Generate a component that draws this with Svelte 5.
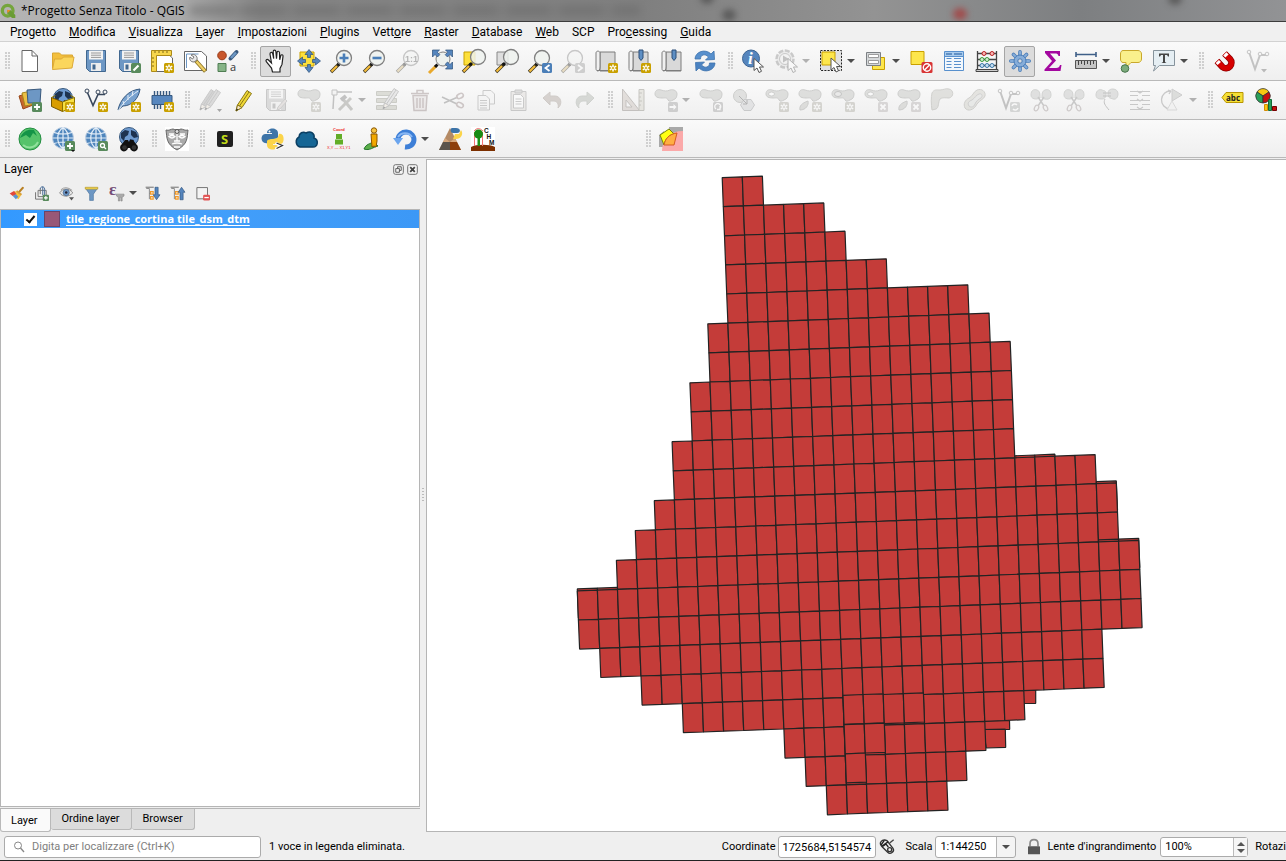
<script>
  const badge = (fill, mark) =>
    `<rect x="14" y="14" width="10" height="10" rx="1.5" fill="${fill}"/>${mark}`;
  const starMark =
    '<path d="M19 15.5v7M15.8 17.2l6.4 3.6M22.2 17.2l-6.4 3.6" stroke="#fff" stroke-width="1.5"/><circle cx="19" cy="19" r="1" fill="#c9a000"/>';
  const star = badge('#c9a000', starMark);
  const greyStar = badge('#a9a592', starMark.replace('#c9a000', '#a9a592'));
  const plus = badge('#588a5c', '<path d="M19 16v6M16 19h6" stroke="#fff" stroke-width="1.8"/>');
  const greyCross = badge('#b3a9a9', '<path d="M16.5 16.5l5 5M21.5 16.5l-5 5" stroke="#fff" stroke-width="1.8"/>');
  const cursor = (x, y) =>
    `<path transform="translate(${x} ${y})" d="M0 0v12l3-2.5 2 4.5 2.5-1.2-2-4.3h4z" fill="#fff" stroke="#555" stroke-width="1"/>`;
  const lens = (cx = 14, cy = 9, r = 7.5) =>
    `<path d="M1 23l8-8" stroke="#3a3320" stroke-width="3.4"/><path d="M1.5 22.5l5.5-5.5" stroke="#f5bd3c" stroke-width="2.2"/><path d="M8 16l2-2" stroke="#111" stroke-width="3"/><circle cx="${cx}" cy="${cy}" r="${r}" fill="#eef2ee" fill-opacity=".85" stroke="#808080" stroke-width="1.3"/>`;
  const blob = '<path d="M1 6c0-4 3-5 6-4 3 1 6 1.500 9 0 4-1 7 1 7 4s-1 5-4 6c-2 1-4 2-5 0-1-3-3-2-6-2-4 0-7-1-7-4z" fill="#b9bbb4" stroke="#8d908a"/>';
  const leaf = '<path d="M2 22c-1-4 2-7 8-9 1 4-2 9-8 9z" fill="#b9bbb4" stroke="#8d908a"/>';
  const globe =
    '<circle cx="12" cy="11" r="10.500" fill="#4f86bd" stroke="#b8cbe0"/><path d="M12 .5v21M1.500 11h21M3 5.500q9 3 18 0M3 16.500q9-3 18 0M12 .5c-7 5-7 16 0 21M12 .5c7 5 7 16 0 21" fill="none" stroke="#e4eef8" stroke-width="1.2"/>';
  const earth =
    '<circle cx="12" cy="10" r="9.500" fill="#6f9bd0" stroke="#38597e"/><path d="M4 6l4-3 4 1-1 4-3 2-1 4-3-3zM14 3l5 2 2 5-4 1-3-3zM13 12l4 1-2 5-3-2z" fill="#1e3350"/>';
  const pencil = (f, s, t = '') =>
    `<g ${t}><path d="M5 23l1.500-6L16 2.500l4.500 3L11 19.500z" fill="${f}" stroke="${s}"/><path d="M8.500 18L18 4" stroke="${s}" stroke-width="1"/><path d="M5 23l1.500-6 4.500 2.500z" fill="#f3e3c6" stroke="${s}"/><path d="M5 23l.7-2.500 1.500 1z" fill="#222"/></g>`;
  const book = () =>
    '<path d="M6 3h15v19h-15z" fill="#d9d9d9" stroke="#7d7d7d"/><path d="M2 4c0-2.500 4-2.500 4 0v14c0 5-4 5-4 1.500z" fill="#f0f0f0" stroke="#7d7d7d"/><path d="M3 21.500h18" stroke="#7d7d7d"/>';
  const mark = (x) => `<path d="M${x} 1h4v8l-2 2.500-2-2.500z" fill="#5e8fc4" stroke="#2c4f78"/>`;
  const scissors =
    '<path d="M2 7c0-5 3-6 6-5s3 4 3 8c-4 2-9 1-9-3zM13 10c0-4 0-7 3-8s6 0 6 5-5 5-9 3z" fill="#bcc0bb" stroke="#989c97"/><path d="M9 9l6 9M15 9l-6 9" stroke="#888" stroke-width="1.5"/><ellipse cx="7.500" cy="20" rx="2" ry="3" fill="none" stroke="#a28f90" stroke-width="1.3" transform="rotate(25 7.500 20)"/><ellipse cx="16.500" cy="20" rx="2" ry="3" fill="none" stroke="#a28f90" stroke-width="1.300" transform="rotate(-25 16.500 20)"/>';
  const floppy = (f, s) =>
    `<path d="M2.500 1.500h19v21h-16l-3-3z" fill="${f}" stroke="${s}"/><path d="M5 1.500h14v9h-14z" fill="#f3f3f3"/><path d="M7 4h10M7 6.200h10M7 8.400h10" stroke="#999"/><path d="M7 14h10v8h-10z" fill="#eee"/><path d="M8.500 15.500h3v5h-3z" fill="${s}"/>`;
  const nodes =
    '<path d="M4 3l6 17 5-14h7" fill="none" stroke="#7a7a7a" stroke-width="2"/><g fill="#f2f2f2" stroke="#7a7a7a"><circle cx="4" cy="3" r="1.800"/><circle cx="15" cy="5" r="1.800"/><circle cx="22" cy="5" r="1.800"/></g>';

  const icons = {
    qgis: '<circle cx="11.500" cy="11.500" r="8" fill="none" stroke="#74a53c" stroke-width="5"/><path d="M11 11h5l7 7v4.500h-5l-7-7z" fill="#6a9c34"/><path d="M10.500 10l5 1-4 4z" fill="#ef8b24"/>',
    newProject: '<path d="M4 1.500h10l5.500 5.500v15.500h-15.500z" fill="#fff" stroke="#666"/><path d="M14 1.500v5.500h5.500" fill="none" stroke="#666"/>',
    open: '<path d="M1.500 19v-15h7l2 2h11v4z" fill="#f3bf3d" stroke="#d9a633"/><path d="M1.500 20.500l2-10.500h7l2-2h10.500l-2 11z" fill="#fbd65c" stroke="#dca937"/>',
    save: floppy('#6d97c4', '#41678f'),
    saveAs: floppy('#6d97c4', '#41678f') + badge('#588a5c', '<path d="M16.500 21.500l5-5" stroke="#fff" stroke-width="2.200"/>'),
    layout: '<path d="M6 5h12l4.500 4v13.500h-16.500z" fill="#fff" stroke="#666"/><path d="M1.500 1.500h20v5h-15v16h-5z" fill="#f7d64c" stroke="#ad8b18"/><path d="M5 2v2M9 2v2M13 2v2M17 2v2M2 9h2M2 13h2M2 17h2" stroke="#806a18"/>' + star,
    layoutManager: '<path d="M1.500 2.500h17l5 4.500v14.500h-22z" fill="#fff" stroke="#666"/><path d="M3.500 5h12M3.500 5v14" stroke="#6d97c4"/><path d="M8 6c3-2 7 1 6 5l-3 2c-3 0-5-2-4-5l2.500 2 1.500-2z" fill="#e8e8e8" stroke="#777"/><path d="M13 12l9.500 10.500" stroke="#8a7327" stroke-width="4"/><path d="M13.500 12.500l8.500 9.500" stroke="#efcf63" stroke-width="2.300"/>',
    style: '<circle cx="6" cy="6.500" r="4.300" fill="#c8572c" stroke="#9a3b18"/><path d="M14.500 9.500l6-6.500" stroke="#38587c" stroke-width="4" stroke-linecap="round"/><path d="M15 9l5-5.500" stroke="#6d97c4" stroke-width="2.500"/><path d="M2 14.500h8v8h-8z" fill="#86b487" stroke="#4f7d53"/><text x="14" y="22" font-family="Open Sans, sans-serif" font-size="11" fill="#333">a</text>',
    pan: '<path d="M8.500 23l-1-4-5-6c-1.500-2 .5-3.500 2-2l3 3-1.500-9c0-2 2.300-2.300 2.700-.4l1 5-.5-7c0-2 2.500-2 2.700 0l.6 7 .5-6c.2-2 2.500-1.700 2.500.2l.2 7 1-4c.6-1.700 2.600-1.200 2.300.6l-1 8-2 4v3.600z" fill="#fff" stroke="#222" stroke-width="1.200"/>',
    panSelection: '<path d="M3 3h14v14h-14z" fill="#fde03c" stroke="#c9a000"/><g fill="#5585bd" stroke="#2d5078" stroke-width=".7"><path d="M12 .5l4 5h-2.500v3h-3v-3h-2.500z"/><path d="M12 23.500l4-5h-2.500v-3h-3v3h-2.500z"/><path d="M.5 12l5-4v2.500h3v3h-3v2.500z"/><path d="M23.500 12l-5-4v2.500h-3v3h3v2.500z"/></g>',
    zoomIn: lens() + '<path d="M14 4.500v9M9.500 9h9" stroke="#4b7fb8" stroke-width="2.600"/>',
    zoomOut: lens() + '<path d="M9.500 9h9" stroke="#4b7fb8" stroke-width="2.600"/>',
    zoomNative: lens(15) + '<text x="9" y="13" font-family="Liberation Sans, sans-serif" font-weight="bold" font-size="9" fill="#555">1:1</text>',
    zoomFull: '<path d="M0 24l7-7" stroke="#e9a92c" stroke-width="3"/><path d="M6 18l2.500-2.500" stroke="#111" stroke-width="3"/><circle cx="14" cy="10" r="7" fill="#eef2ee" stroke="#808080"/><g fill="#5585bd" stroke="#2d5078" stroke-width=".7"><path d="M3.500 1h7l-2.200 2.200 2.500 2.500-2.300 2.300-2.500-2.500-2.500 2.500z"/><path d="M23.500 1h-7l2.200 2.200-2.500 2.500 2.300 2.300 2.500-2.500 2.500 2.500z"/><path d="M23.500 20h-7l2.200-2.200-2.500-2.500 2.300-2.300 2.500 2.500 2.500-2.500z"/></g>',
    zoomSelection: '<path d="M2 3h11v13h-11z" fill="#fde03c" stroke="#c9a000"/>' + lens(16, 8),
    zoomLayer: '<path d="M2 3h11v13h-11z" fill="#dedede" stroke="#888"/>' + lens(16, 8),
    zoomLast: lens() + badge('#4b7fb8', '<path d="M21.500 16l-4 3 4 3" fill="none" stroke="#fff" stroke-width="1.800"/>'),
    zoomNext: lens() + badge('#999', '<path d="M17 16l4 3-4 3" fill="none" stroke="#fff" stroke-width="1.800"/>'),
    newView: book() + star,
    newBookmark: book() + mark(12) + star,
    bookmarks: book() + mark(12),
    refresh: '<path d="M2 10c0-7 10-11 16-5l3-3 .5 8.500-9 .5 3-3c-4-4-8-2-8 2z" fill="#5890cd" stroke="#3f74ad" stroke-width=".8"/><path d="M22 14c0 7-10 11-16 5l-3 3-.5-8.500 9-.5-3 3c4 4 8 2 8-2z" fill="#4b83c2" stroke="#3f74ad" stroke-width=".8"/>',
    identify: '<circle cx="10" cy="9.500" r="8.500" fill="#5585bd" stroke="#3c6594"/><text x="7" y="15" font-family="Liberation Serif, serif" font-style="italic" font-weight="bold" font-size="17" fill="#fff">i</text>' + cursor(13, 9.500),
    action: '<circle cx="11" cy="10" r="8.500" fill="#ddd" stroke="#888" stroke-width="2.500" stroke-dasharray="5 1.600"/><circle cx="11" cy="10" r="5.500" fill="#eee" stroke="#888"/><path d="M9 6.500l6 3.500-6 3.500z" fill="#777"/>' + cursor(14, 9.500),
    select: '<path d="M1.500 1.500h21v20h-21z" fill="#e2e2e2" stroke="#222" stroke-dasharray="2 1.300"/><path d="M3 3h13v13h-13z" fill="#fde64c" stroke="#c9a000"/>' + cursor(12, 9),
    selectValue: '<path d="M8.500 8.500h12v12h-12z" fill="#fde64c" stroke="#c9a000"/><path d="M2.500 3.500h14v13h-14z" fill="#d5d8da" stroke="#7c8084"/><path d="M4.500 5.500h10v3h-10zM4.500 11.500h10v3h-10z" fill="#fff" stroke="#888" stroke-width=".8"/>',
    deselect: '<path d="M2 2.500h13v13h-13z" fill="#fde64c" stroke="#c9a000"/><rect x="12.500" y="13" width="11" height="11" rx="1.500" fill="#d83434"/><circle cx="18" cy="18.500" r="3.700" fill="none" stroke="#fff" stroke-width="1.400"/><path d="M15.500 21l5-5" stroke="#fff" stroke-width="1.400"/>',
    table: '<path d="M2.500 2.500h19v19h-19z" fill="#f2f7fc" stroke="#5890cd"/><path d="M3 3h18v4h-18z" fill="#a9cbec"/><path d="M4 5h6M12 5h8" stroke="#4b7fb8" stroke-width="1.500"/><path d="M4.500 9.500h5M4.500 12.500h5M4.500 15.500h5M4.500 18.500h5M12 9.500h7M12 12.500h7M12 15.500h7M12 18.500h7" stroke="#5890cd"/><path d="M3 7.500h18" stroke="#5890cd"/>',
    abacus: '<path d="M2.500 2v19M21.500 2v19M2.500 4.500h19M2.500 10.500h19M2.500 16.500h19" stroke="#444" stroke-width="1.300"/><path d="M1 20.500h22v2h-22z" fill="#ccc" stroke="#444"/><g stroke="#b22" fill="#f6b4b4"><circle cx="9" cy="4.500" r="2"/><circle cx="17" cy="4.500" r="2"/></g><g stroke="#3b9a3b" fill="#cdeccd"><circle cx="7" cy="10.500" r="2"/><circle cx="12" cy="10.500" r="2"/></g><g stroke="#3a78a8" fill="#c8dff2"><circle cx="7" cy="16.500" r="2"/><circle cx="12" cy="16.500" r="2"/><circle cx="17" cy="16.500" r="2"/></g>',
    gear: '<g stroke="#4a7db8" stroke-width="3.600" stroke-linecap="round"><path d="M12 2.800v18.400M2.800 12h18.400M5.500 5.500l13 13M18.500 5.500l-13 13"/></g><g stroke="#86add9" stroke-width="2" stroke-linecap="round"><path d="M12 2.800v18.400M2.800 12h18.400M5.500 5.500l13 13M18.500 5.500l-13 13"/></g><circle cx="12" cy="12" r="6" fill="#86add9" stroke="#4a7db8"/><circle cx="12" cy="12" r="2.200" fill="#ddd" stroke="#4a7db8"/>',
    sigma: '<path d="M4 2h15v5h-1.500c-.5-2-1.500-2.500-3.500-2.500h-5l6 7-7 7.500h7c2.500 0 3.500-1 4-3h1.500l-1 6h-16v-1.500l7.500-8.500-7-8z" fill="#a3079f"/>',
    measure: '<path d="M2 5.500h20M2 3v5M22 3v5" stroke="#3f5f88" stroke-width="1.600"/><path d="M1.500 11.500h21v8h-21z" fill="#c5c5c5" stroke="#555"/><path d="M4.500 12v4M7.500 12v3M10.500 12v4M13.500 12v3M16.500 12v4M19.500 12v3" stroke="#444"/>',
    tips: '<path d="M4 1.500h15c2 0 3.500 1.500 3.500 3.500v5c0 2-1.500 3.500-3.500 3.500h-7l-5 5v-5h-3c-1.500 0-2.500-1.500-2.500-3.500v-5c0-2 1-3.500 2.500-3.500z" fill="#faf08c" stroke="#c9a82c"/><circle cx="6" cy="19.500" r="3.800" fill="#7cab7c" stroke="#47744b"/>',
    annotation: '<path d="M1.500 1.500h21v15h-15l-6 5.500 2-5.500h-2z" fill="#e5eef3" stroke="#86939c"/><path d="M7 4.500h10v3h-1l-1-1.500h-2v7l1.500 1h-5l1.500-1v-7h-2l-1 1.500h-1z" fill="#444"/>',
    magnet: '<path d="M11.500 4.500l5.500 5.500a5.500 5.500 0 0 1-7.500 8l-5.500-6" fill="none" stroke="#8e0000" stroke-width="6.500" transform="translate(1 0)"/><path d="M11.500 4.500l5.500 5.500a5.500 5.500 0 0 1-7.500 8l-5.500-6" fill="none" stroke="#d60000" stroke-width="5" transform="translate(1 0)"/><path d="M12.800 4.800l2.200 2.200M5.300 12.400l2 2.200" stroke="#fff" stroke-width="4.500"/>',
    snapping: nodes + '<path d="M16 20h6l-3 3.500z" fill="#666"/>',
    dataSource: '<path d="M1 8l9-3 5 12-10 4z" fill="#c8672c" stroke="#994718"/><path d="M4 5l9-2 4 13-10 2z" fill="#eac045" stroke="#a98518"/><path d="M9 2l14-1-1 14-12 0z" fill="#6d97c4" stroke="#38587c"/>' + plus,
    geopackage: earth + '<path d="M.5 9.500l11 4.500v9.500l-11-5z" fill="#d99d00" stroke="#775800"/><path d="M23.500 9.500l-12 4.500v9.500l12-5z" fill="#f6df44" stroke="#8b7000"/><path d="M.5 9.500l4-2M23.500 9.500l-4-2" stroke="#8b7000"/>' + star,
    shapefile: '<path d="M3 3.500l6 14 5-11h7" fill="none" stroke="#38475c" stroke-width="1.600"/><g fill="#f5f5f5" stroke="#38475c"><circle cx="3" cy="3" r="2"/><circle cx="14" cy="4" r="2"/><circle cx="21" cy="4" r="2"/></g>' + star,
    spatialite: '<path d="M1 22c2-10 10-20 22-21-1 9-8 17-17 17z" fill="#78a2cf" stroke="#375980"/><path d="M1 23c5-8 10-13 20-20M7 17l-1-4M11 12l0-5M15 8l1-5" stroke="#e5eef8" fill="none"/>' + star,
    memory: '<path d="M2 7.500h20v9h-20z" fill="#5787bf" stroke="#375980"/><path d="M4.500 3v4M7.500 3v4M10.500 3v4M13.500 3v4M16.500 3v4M19.500 3v4M4.500 17v4M7.500 17v4M10.500 17v4" stroke="#375980" stroke-width="1.400"/>' + star,
    edits: pencil('#a5a5a5', '#8a8a8a', 'transform="translate(-3 -1)"') + pencil('#b5b5b5', '#8a8a8a', 'transform="translate(2 -1)"') + '<path d="M19 21h5l-2.500 3z" fill="#333"/>',
    toggleEdit: pencil('#f1d936', '#8a7718'),
    saveEdits: floppy('#b5b5b5', '#888') + '<path d="M13 22l1-3 7-8 2 2-7 8z" fill="#d3c6c0" stroke="#999"/>',
    addFeature: blob + greyStar,
    vertex: '<path d="M4 4l-1 17M4 4h18" stroke="#777" stroke-width="1.500"/><path d="M2 2h5v5h-5z" fill="#eee" stroke="#777"/><path d="M12 10l10 12M21 10l-12 12" stroke="#8b8b80" stroke-width="3"/><path d="M11 12l5-4" stroke="#777" stroke-width="4"/>',
    modifyAll: '<path d="M1.500 3.500h20v4h-20zM1.500 10.500h20v4h-20zM1.500 17.500h20v4h-20z" fill="#b7b9a0" stroke="#909278"/>' + pencil('#d4d4d4', '#858585', 'transform="translate(3 -2)"'),
    trash: '<path d="M5 7.500h14l-1 15h-12z" fill="#e6dada" stroke="#9e7c7c" stroke-width="1.500"/><path d="M3 5.500h18M9 5v-2.500h6v2.500M9 10v10M12 10v10M15 10v10" stroke="#9e7c7c" stroke-width="1.500" fill="none"/>',
    cut: '<path d="M1 9l15 7M3 15l14-6" stroke="#777" stroke-width="1.600"/><ellipse cx="19" cy="8" rx="3.500" ry="2.300" fill="none" stroke="#a28080" stroke-width="1.600" transform="rotate(-25 19 8)"/><ellipse cx="19" cy="17" rx="3.500" ry="2.300" fill="none" stroke="#a28080" stroke-width="1.600" transform="rotate(25 19 17)"/>',
    copy: '<path d="M9 2.500h8l3.500 3.500v10h-11.500z" fill="#f4f4f4" stroke="#8c8c8c"/><path d="M4 7.500h8l3.500 3.500v11h-11.500z" fill="#f4f4f4" stroke="#8c8c8c"/><path d="M6 12.500h7M6 15h7M6 17.500h7M6 20h7" stroke="#8c8c8c"/>',
    paste: '<path d="M4 3.500h15v19h-15z" fill="#ddd8d0" stroke="#8c8c8c"/><path d="M6.500 6.500h7l3 3v10.500h-10z" fill="#fff" stroke="#8c8c8c"/><path d="M8 2h7v3h-7z" fill="#bbb" stroke="#888"/><path d="M8.500 11h6M8.500 13.500h6M8.500 16h6" stroke="#8c8c8c"/>',
    undo: '<path d="M3 10l7-6v4h5c6 0 8 8 3 12 1-4-1-7-4-7h-4v4z" fill="#b09c8c" stroke="#a08c7c"/>',
    redo: '<path d="M21 10l-7-6v4h-5c-6 0-8 8-3 12-1-4 1-7 4-7h4v4z" fill="#a5b0a0" stroke="#939e8f"/>',
    cad: '<path d="M1.500 1l17 21.500h-17zM5 12v7h6z" fill="#cdb9ac" stroke="#85776c" fill-rule="evenodd"/><path d="M18 1.500h5v21h-5zM18 5h3M18 9h2M18 13h3M18 17h2" fill="#d5d0bb" stroke="#85806c"/>',
    move: blob + badge('#999', '<path d="M15.500 18h4v-2l3 3-3 3v-2h-4z" fill="#fff"/>'),
    rotate: blob + badge('#999', '<path d="M17 21a3 3 0 1 1 3.500 0M21 18v3.500h-3" fill="none" stroke="#fff" stroke-width="1.300"/>'),
    simplify: '<circle cx="8" cy="8" r="6.500" fill="#bfc1bd" stroke="#8d908a"/><path d="M12 11.500h7l3.500 5.500-3.500 5.500h-7l-3.500-5.500z" fill="#c8cbd0" stroke="#8b8e92"/><path d="M7 8l8 8M15 12v4h-4" fill="none" stroke="#555"/>',
    addRing: blob + '<ellipse cx="6.500" cy="6" rx="3" ry="2" fill="#fff" stroke="#8d908a"/>' + greyStar,
    addPart: blob + leaf + greyStar,
    fillRing: blob + '<ellipse cx="7" cy="6" rx="3.500" ry="2.500" fill="#d8d8d4" stroke="#777"/>' + greyStar,
    deleteRing: blob + '<ellipse cx="6.500" cy="6" rx="3" ry="2" fill="#fff" stroke="#8d908a"/>' + greyCross,
    deletePart: blob + leaf + greyCross,
    reshape: '<path d="M2 22c-1-6-1-13 0-17 2-4 5-3 8-3s6-2 9-1c5 1 5 8 0 9-3 0-7-1-9 1-2 3-1 9-4 10z" fill="#c1c0b4" stroke="#97968a"/>',
    offset: '<path d="M2 20c-2-4 0-8 4-10 4-2 4-6 8-8 5-2 9 2 8 6-1 3-5 4-8 8-3 6-9 8-12 4z" fill="#cbc9b8" stroke="#98968a"/><path d="M6 18c-2-3 0-5 3-6 3-2 4-5 7-6 3-1 4 2 2 4-2 1-5 3-6 6-1 3-4 4-6 2z" fill="#d5d8d3" stroke="#999"/>',
    reshapeLine: nodes + badge('#a5aba8', '<path d="M16 18a3 3 0 0 1 5-1M22 20a3 3 0 0 1-5 1" fill="none" stroke="#fff" stroke-width="1.500"/>'),
    split: scissors,
    merge: '<path d="M1 7c0-5 4-6 6-5s4 0 4 4-2 5-4 5-6 0-6-4zM13 6c0-4 2-5 5-5s5 2 5 5-2 6-5 5-5-1-5-5z" fill="#bcc0bb" stroke="#989c97"/><path d="M8 5h8M8 8h8M10 11c-2 4 0 6 4 11" stroke="#777" fill="none"/>',
    mergeAttr: '<path d="M2 3.500h20M2 7.500h8M14 7.500h8M2 12.500h20M2 16.500h8M14 16.500h8M2 21.500h20M9 3l3 2 3-2M9 11l3 2 3-2M9 19l3 2 3-2" stroke="#888" stroke-width="1.200" fill="none"/>',
    rotateSymbols: '<path d="M9 21a9 9 0 0 1 1-18M10 3l-3-1M10 3l-2 3" fill="none" stroke="#888" stroke-width="1.300"/><path d="M11 1l10 6-10 6z" fill="#b5b8b3" stroke="#909090"/><path d="M6 22l5-9 5 9z" fill="#f0f0f0" stroke="#b0b0b0"/>',
    label: '<path d="M1 9.500l4-5h17v10h-17z" fill="#f5df35" stroke="#b89500"/><text x="5" y="12.500" font-family="Open Sans, sans-serif" font-weight="bold" font-size="8" fill="#222">abc</text>',
    diagram: '<path d="M9 8L3 4a7 7 0 0 1 12 0z" fill="#f7c912" stroke="#333" stroke-width=".8"/><path d="M9 8v7A7 7 0 0 1 3 4z" fill="#29a05a" stroke="#333" stroke-width=".8"/><path d="M9 8l6-4a7 7 0 0 1-6 11z" fill="#c80f0f" stroke="#333" stroke-width=".8"/><path d="M10.500 16.500h3v6h-3z" fill="#f7c912" stroke="#d58b00"/><path d="M14.500 11.500h3v11h-3z" fill="#29a05a" stroke="#136b38"/><path d="M18.500 18.500h4v4h-4z" fill="#c80f0f" stroke="#700"/>',
    greenBall: '<circle cx="12" cy="12" r="11" fill="#56c36b" stroke="#258e42"/><path d="M2 11c3-7 8-9 14-8l3 6-4-3-3 5-4-3z" fill="#149447"/><path d="M5 18c5 4 12 3 15-3" fill="none" stroke="#91e09c" stroke-width="2"/>',
    webAdd: globe + plus + '<path d="M20 23h4l-2 2z" fill="#111"/>',
    webSearch: globe + badge('#588a5c', '<circle cx="18.500" cy="18.500" r="2" fill="none" stroke="#fff" stroke-width="1.300"/><path d="M20 20l2 2" stroke="#fff" stroke-width="1.300"/>'),
    binoculars: earth + '<path d="M8 13h3l1 2 1-2h3l3 4a4 4 0 1 1-6 4h-2a4 4 0 1 1-6-4z" fill="#111"/><circle cx="7.500" cy="20.500" r="2.300" fill="#333"/><circle cx="17" cy="20.500" r="2.300" fill="#333"/>',
    mask: '<path d="M0 0h24v24h-24z" fill="#fff"/><path d="M1 3c3 1 5-1 7-1 2 1 6 1 8 0 2 0 4 2 7 1-1 8 0 14-11 20C1 17 2 11 1 3z" fill="#aaa" stroke="#666"/><path d="M4 7h5M15 7h5M4 9.500q3-2 6 0q-3 3-6 0zM14 9.500q3-2 6 0q-3 3-6 0zM12 6v8M9 14h6M7 17q5-2 10 0M9 20h6" fill="none" stroke="#fff" stroke-width="1.300"/><circle cx="12" cy="4.500" r="2" fill="#ddd" stroke="#555"/>',
    scp: '<rect x="4" y="4" width="16" height="16" rx="2" fill="#202020"/><text x="8" y="17" font-family="Open Sans, sans-serif" font-weight="bold" font-size="13" fill="#c2dc18">S</text>',
    python: '<path d="M6 6c0-6 11-6 11 0v4c0 3-8 1-9 4l-1 2c-8 2-8-9-3-9h7v-1z" fill="#3d74a8"/><path d="M18 7c6-2 6 11 1 10h-7v1h5c0 6-11 6-11 0v-4c1-3 10-1 11-4z" fill="#fbd44a"/><circle cx="8.500" cy="4.500" r="1" fill="#fff"/><path d="M14.500 16l6 3-6 3" fill="none" stroke="#fff" stroke-width="3"/><path d="M15.500 16l6 2.500-6 3" fill="none" stroke="#333" stroke-width="1.200"/>',
    cloud: '<path d="M6 20a5.500 5.500 0 0 1-1-10c0-4 4-6 7-4 5-3 9 1 8 5 5 2 4 9-1 9z" fill="#166695" stroke="#0b3f63" stroke-width="1.500"/>',
    coordinate: '<text x="6" y="4" font-family="Liberation Sans, sans-serif" font-weight="bold" font-size="4" fill="#e22">Coord</text><path d="M9 7h6v5h-6zM8 12.500h8v5h-8z" fill="#62ad27"/><text x="0" y="22" font-family="Liberation Sans, sans-serif" font-size="4" fill="#e22">X,Y — X1,Y1</text>',
    streetView: '<path d="M4 22c2-5 6-5 9-7l5 4c-5 1-8 5-14 3z" fill="#5bae49" stroke="#22752b"/><path d="M11 7h6v7l-1 6-2-1-2 1z" fill="#f2a900" stroke="#8c5700"/><circle cx="14" cy="3.500" r="2.700" fill="#f7c543" stroke="#8c5700"/>',
    reload: '<path d="M5 12a8 7.500 0 1 1 7 8" fill="none" stroke="#3d7fd7" stroke-width="5"/><path d="M5 10a8 7.500 0 0 1 14 0" fill="none" stroke="#88b7f3" stroke-width="2"/><path d="M0 11h10l-5 7z" fill="#6ba5ee"/>',
    triangle: '<path d="M12 1l11 22h-22z" fill="#b48a65"/><path d="M5 15h7v8h-11z" fill="#5b554d"/><path d="M12 15h7l4 8h-11z" fill="#8d3f0b"/><path d="M7 11l5 4 5-4 2 4h-14z" fill="#d6a77b"/><path d="M14 1h4c5 0 5 5 1 5h-4c-3 0-3-5-1-5z" fill="#3d74a8"/><path d="M17 7h4l2-4c3 4 0 9-5 9h-3z" fill="#fbd44a"/>',
    chm: '<path d="M0 0h24v24h-24z" fill="#fff"/><path d="M0 20c5-3 19-3 24 0v4h-24z" fill="#7c2f00"/><path d="M3.500 5v14M11.500 5v14M3 4q4-5 9 0" stroke="#f27474" fill="none"/><path d="M6.500 10h2.500v9h-2.500z" fill="#1d9218"/><circle cx="7.500" cy="7" r="4.500" fill="#188b13"/><g font-family="Liberation Sans, sans-serif" font-weight="bold" font-size="6.500" fill="#111"><text x="13" y="6">C</text><text x="15.500" y="12">H</text><text x="18" y="18">M</text></g>',
    pentagon: '<path d="M10 0h14v9h-14z" fill="#a9a9a9"/><path d="M0 8l5-4v16h-5z" fill="#a9a9a9"/><path d="M3 24c0-12 8-20 21-20v20z" fill="#fba9a9"/><path d="M1 8l9-6 5 5c-5 1-9 5-10 11z" fill="#ffff13" stroke="#77860a"/><path d="M5 18C6 12 10 7 18 6l-3 12z" fill="#ffae42" stroke="#d65a20"/>',
    brush: '<path d="M15 11l7-8" stroke="#b98024" stroke-width="3.500" stroke-linecap="round"/><path d="M9 8l11 6-5 7-11-8z" fill="#f5c33c"/><path d="M1 12l7-4 4 5-6 3z" fill="#e2483a"/><path d="M6 16l5-3 4 4-4 4z" fill="#5b93cf"/><path d="M12 8l8 6" stroke="#d9a038" stroke-width="3"/>',
    group: '<path d="M2.500 10v11h12M6.500 7v10h13V7zM10 4v9" fill="none" stroke="#777" stroke-width="1.600"/><path d="M14 1v14M10 5c0-5 7-5 7 0v10" fill="none" stroke="#4c6f99" stroke-width="1.600"/>' + plus,
    eye: '<path d="M1 11c5-8 16-8 21 0-6 7-16 7-21 0z" fill="#e9e9e9" stroke="#888" stroke-width="1.500"/><circle cx="11.500" cy="10.500" r="5" fill="#6e99c8" stroke="#3b5d85"/><circle cx="11.500" cy="10.500" r="2" fill="#223"/><path d="M3 6q8-7 18 1" fill="none" stroke="#999" stroke-width="1.500"/><path d="M16 18h8l-4 5z" fill="#555"/>',
    filter: '<path d="M2 3h20l-7 10v10h-6V13z" fill="#6d97c4" stroke="#4c739d"/><path d="M2 2h20v3h-20z" fill="#f5d650" stroke="#ba9a27"/>',
    expression: '<text x="0" y="15" font-family="Liberation Serif, serif" font-weight="bold" font-size="28" fill="#765078">ε</text><path d="M12 13h12v3l-3 2v6h-2v-6h-2v6h-2v-6l-3-2z" fill="#aaa" stroke="#888"/>',
    expand: '<path d="M2 4h5v17M7 12h5" fill="none" stroke="#888" stroke-width="1.500"/><path d="M9 9h4v4h-4zM9 17h4v4h-4z" fill="#fff" stroke="#f19a2a" stroke-width="2"/><path d="M1 2h13" stroke="#888" stroke-width="2"/><path d="M16 2h5v12h3l-5.500 8-5.500-8h3z" fill="#5585bd" stroke="#2d5078"/>',
    collapse: '<path d="M2 4h5v17M7 12h5" fill="none" stroke="#888" stroke-width="1.500"/><path d="M9 9h4v4h-4zM9 17h4v4h-4z" fill="#fff" stroke="#f19a2a" stroke-width="2"/><path d="M1 2h13" stroke="#888" stroke-width="2"/><path d="M16 22h5V10h3L18.500 2 13 10h3z" fill="#5585bd" stroke="#2d5078"/>',
    removeLayer: '<path d="M3 2.500h17v18h-17z" fill="#f4f4f4" stroke="#777" stroke-width="1.600"/><rect x="13" y="14" width="11" height="9" rx="2" fill="#e25555"/><path d="M15 18.500h7" stroke="#fff" stroke-width="2"/>',
    float: '<rect x="1.500" y="1.500" width="21" height="21" rx="4" fill="#f5f5f5" stroke="#666" stroke-width="2"/><path d="M6 10h8v8h-8zM10 10v-4h8v8h-4" fill="none" stroke="#555" stroke-width="2"/>',
    close: '<rect x="1.500" y="1.500" width="21" height="21" rx="4" fill="#f5f5f5" stroke="#666" stroke-width="2"/><path d="M7 7l10 10M17 7l-10 10" stroke="#444" stroke-width="4"/>',
    search: '<circle cx="10" cy="9" r="7" fill="none" stroke="#888" stroke-width="2"/><path d="M15 14l7 8" stroke="#888" stroke-width="2.500"/>',
    mouse: '<path d="M3 4c3-4 9-3 11 1l7 9c3 5-4 10-8 6L5 12C2 9 1 6 3 4z" fill="#eee" stroke="#333" stroke-width="2"/><path d="M4 11L14 4M8 2l-5 7M10 7l4 5M6 11l5-4" stroke="#222" stroke-width="2"/><circle cx="16" cy="16" r="3" fill="none" stroke="#333" stroke-width="2"/><path d="M16 6l6-5" stroke="#444" stroke-width="2"/>',
    lock: '<path d="M6 11V7c0-8 12-8 12 0v4" fill="none" stroke="#888" stroke-width="2.500"/><rect x="3" y="11" width="18" height="12" rx="1" fill="#555"/>'
  };

  const names = (list) => list.split(' ').map((n) => {
    const [name, flags = ''] = n.split(':');
    return { name, off: flags.includes('d'), menu: flags.includes('m'), on: flags.includes('p') };
  });

  const toolbars = [
    [
      names('newProject open save saveAs layout layoutManager style'),
      names('pan:p panSelection zoomIn zoomOut zoomNative:d zoomFull zoomSelection zoomLayer zoomLast zoomNext:d newView newBookmark bookmarks refresh'),
      names('identify action:dm select:m selectValue:m deselect table abacus gear:p sigma measure:m tips annotation:m'),
      names('magnet snapping:d')
    ],
    [
      names('dataSource geopackage shapefile spatialite memory'),
      names('edits:d toggleEdit saveEdits:d addFeature:d vertex:dm modifyAll:d trash:d cut:d copy:d paste:d undo:d redo:d'),
      names('cad:d move:dm rotate:d simplify:d addRing:d addPart:d fillRing:d deleteRing:d deletePart:d reshape:d offset:d reshapeLine:d split:d split:d merge:d mergeAttr:d rotateSymbols:dm'),
      names('label diagram')
    ],
    [
      names('greenBall webAdd webSearch binoculars'),
      names('mask'),
      names('scp'),
      names('python cloud coordinate streetView reload:m triangle chm'),
      names('pentagon')
    ]
  ];

  const menus = [
    ['P', 'r', 'ogetto'], ['', 'M', 'odifica'], ['', 'V', 'isualizza'], ['', 'L', 'ayer'],
    ['', 'I', 'mpostazioni'], ['', 'P', 'lugins'], ['Vett', 'o', 're'], ['', 'R', 'aster'],
    ['', 'D', 'atabase'], ['', 'W', 'eb'], ['SCP', '', ''], ['Pro', 'c', 'essing'], ['', 'G', 'uida']
  ];

  const layerTools = names('brush group eye filter expression:m expand collapse removeLayer');

  // First and last column of every tile row, north to south.
  const spans = [
    [0, 2], [0, 5], [0, 6], [0, 8], [0, 12], [-1, 13], [-1, 14], [-2, 14], [-2, 14], [-3, 14], [-3, 18],
    [-4, 19], [-5, 19], [-6, 20], [-8, 20], [-8, 20], [-7, 18], [-5, 18], [-3, 14], [2, 12], [3, 11], [4, 10]
  ];
  // Tiles whose survey sheet sits slightly north of the regular grid.
  const shifted = {
    10: [[14, 2], [15, 2]], 11: [[18, 2]], 13: [[18, 2], [19, 2]], 14: [[-8, 2], [-7, 2]],
    18: [[5, 2.3], [6, 2.3], [7, 1.6], [8, 1.6]], 19: [[5, 2], [6, 2]], 20: [[5, 2]]
  };
  const at = (r, c, up = 0) => [
    722.2 + 1.13 * r + 20.09 * c,
    177.6 + 29.1 * r - 0.75 * c - 0.0015 * c * c - up
  ];
  const quad = (r, c, up = 0) =>
    [at(r, c, up), at(r, c + 1, up), at(r + 1, c + 1, up), at(r + 1, c, up)]
      .map((p) => p.map((n) => n.toFixed(1)).join(',')).join(' ');

  const tiles = [
    '1020,690.5 1035.7,690 1035.7,703.3 1020,703.5',
    '982,721 1009.5,720.3 1009.7,729.3 982,729.5',
    '982,729.5 1005.3,729.2 1005.7,747.3 986.3,748 985,740'
  ];
  spans.forEach(([a, b], r) => {
    const moved = shifted[r] ?? [];
    const push = () => moved.forEach(([c, up]) => tiles.push(quad(r, c, up)));
    if (r < 18) push();
    for (let c = a; c < b; c++) tiles.push(quad(r, c));
    if (r >= 18) push();
  });
</script>

{#snippet icon(name)}
  <svg class="icon" viewBox="0 0 24 24" aria-hidden="true">{@html icons[name]}</svg>
{/snippet}

{#snippet tool(t)}
  <button class="tool" class:off={t.off} class:on={t.on} disabled={t.off} aria-label={t.name}>
    <span class="face">{@render icon(t.name)}</span>
    {#if t.menu}<span class="arrow"></span>{/if}
  </button>
{/snippet}

<div class="window">
  <header class="title">
    <span class="logo">{@render icon('qgis')}</span>
    <span class="caption">*Progetto Senza Titolo - QGIS</span>
    <i class="smudge"></i><i class="dot one"></i><i class="dot two"></i><i class="dot red"></i><i class="dot three"></i>
  </header>

  <nav class="menu">
    {#each menus as [pre, key, post]}
      <button>{pre}<u>{key}</u>{post}</button>
    {/each}
  </nav>

  {#each toolbars as bar, i}
    <div class="toolbar" class:plugins={i === 2}>
      {#each bar as group}
        <div class="set">
          <span class="grip"></span>
          {#each group as t}{@render tool(t)}{/each}
        </div>
      {/each}
    </div>
  {/each}

  <div class="work">
    <aside>
      <div class="dock-title">
        <span>Layer</span>
        <button aria-label="Sgancia">{@render icon('float')}</button>
        <button aria-label="Chiudi">{@render icon('close')}</button>
      </div>
      <div class="layer-tools">
        {#each layerTools as t}{@render tool(t)}{/each}
      </div>
      <div class="tree">
        <label class="layer">
          <input type="checkbox" checked />
          <span class="swatch"></span>
          <span class="name">tile_regione_cortina tile_dsm_dtm</span>
        </label>
      </div>
      <div class="tabs">
        <button class="active">Layer</button>
        <button>Ordine layer</button>
        <button>Browser</button>
      </div>
    </aside>
    <div class="splitter"><span></span></div>
    <main>
      <svg class="map" role="img" aria-label="tile_regione_cortina">
        <g transform="translate(-427 -160)">
          {#each tiles as points}<polygon {points} />{/each}
        </g>
      </svg>
    </main>
  </div>

  <footer>
    <div class="locator">
      {@render icon('search')}
      <input type="text" aria-label="Localizzatore" placeholder="Digita per localizzare (Ctrl+K)" />
    </div>
    <span class="message">1 voce in legenda eliminata.</span>
    <label for="coord">Coordinate</label>
    <input id="coord" class="coord" type="text" value="1725684,5154574" />
    <button class="small" aria-label="Estensione">{@render icon('mouse')}</button>
    <label for="scale">Scala</label>
    <div class="combo">
      <select id="scale"><option>1:144250</option></select>
      <span class="arrow"></span>
    </div>
    <button class="small lock" aria-label="Blocca scala">{@render icon('lock')}</button>
    <label for="zoom">Lente d'ingrandimento</label>
    <div class="spin">
      <input id="zoom" type="text" value="100%" />
      <div class="steps"><button class="up" aria-label="Aumenta"></button><button class="down" aria-label="Riduci"></button></div>
    </div>
    <span class="rotation">Rotazi</span>
  </footer>
</div>

<style>
  :global(body) { margin: 0; overflow: hidden; }
  .window {
    height: 100vh; display: flex; flex-direction: column; overflow: hidden;
    background: #efefef; color: #000; box-sizing: border-box; border-bottom: 1px solid #222;
    font: 11px/16px Roboto, sans-serif;
  }
  .window :is(button, input, select) { font: inherit; color: inherit; box-sizing: border-box; }
  button { border: 0; padding: 0; margin: 0; background: none; }
  .icon { display: block; width: 24px; height: 24px; flex: none; overflow: visible; }

  .title {
    position: relative; flex: none; height: 21px; display: flex; align-items: center; gap: 5px;
    overflow: hidden; border-bottom: 1px solid #3c3c3c;
    background: linear-gradient(90deg, #b4b4b4 0, #aaa 180px, #858585 260px, #7f7f7f 50%, #939393 68%, #7d7f81 84%, #929395 100%);
  }
  .logo .icon { width: 16px; height: 16px; }
  .caption { position: relative; z-index: 1; font: 12px/20px "Open Sans", sans-serif; }
  .smudge { position: absolute; left: 190px; top: 6px; width: 450px; height: 9px; background: repeating-linear-gradient(90deg, #666 0 37px, #777 45px 53px); filter: blur(4px); opacity: .5; }
  .dot { position: absolute; border-radius: 50%; width: 14px; height: 12px; background: #5c5c5c; filter: blur(3px); }
  .one { left: 722px; top: 9px; }
  .two { left: 700px; top: -8px; }
  .three { left: 1168px; top: -7px; }
  .red { left: 953px; top: 8px; background: #a04b4b; }

  .menu { flex: none; display: flex; height: 19px; padding-left: 3px; background: #f0f0f0; border-bottom: 1px solid #d2d2d2; }
  .window .menu button { padding: 1px 6px 0 7px; font: 12px/18px Roboto, sans-serif; white-space: nowrap; }

  .toolbar {
    flex: none; display: flex; height: 38px; overflow: hidden;
    background: linear-gradient(#fafafa, #efefef); border-bottom: 1px solid #b9b9b9;
  }
  .plugins { height: 37px; }
  .set { display: flex; align-items: center; flex: none; }
  .set + .set { padding-left: 2px; }
  .plugins .set:last-child { margin-left: 140px; }
  .grip {
    width: 5px; height: 18px; margin: 0 3px 0 5px;
    background: radial-gradient(circle at 1px 1px, #cfcfcf 0 1px, transparent 1px) 0 0 / 3px 3px;
  }
  .tool { display: flex; align-items: center; flex: none; }
  .face { display: flex; align-items: center; justify-content: center; width: 33px; height: 31px; box-sizing: border-box; }
  .on .face { width: 31px; margin: 0 1px; background: #dcdcdc; border: 1px solid #a5a5a5; border-radius: 2px; }
  .off { opacity: .4; filter: grayscale(.5); }
  .arrow { width: 0; height: 0; border: 4px solid transparent; border-top-color: #4d4d4d; border-bottom: 0; }
  .tool .arrow { margin: 0 4px 0 0; }

  .work { flex: 1; min-height: 0; display: flex; }
  aside { width: 420px; flex: none; display: flex; flex-direction: column; }
  .dock-title { display: flex; align-items: center; height: 20px; padding: 1px 2px 0 4px; gap: 3px; }
  .dock-title span { flex: 1; font: 12px/18px Roboto, sans-serif; }
  .dock-title .icon { width: 11px; height: 11px; }
  .layer-tools { display: flex; height: 28px; align-items: center; padding: 0 0 2px 4px; }
  .layer-tools .face { width: 25px; }
  .layer-tools .icon { width: 15px; height: 15px; }
  .layer-tools .arrow { margin-right: 3px; }
  .tree { flex: 1; background: #fff; border: 1px solid #b5b5b5; }
  .layer { display: flex; align-items: center; height: 18px; padding-left: 23px; color: #fff; background: linear-gradient(90deg, #3399ff, #43a0fc 40%, #3c98f6); }
  .layer input { appearance: none; position: relative; width: 13px; height: 13px; margin: 0 7px 0 0; background: #fff; border: 0; }
  .layer input:checked::after { content: ""; position: absolute; left: 4px; top: 1px; width: 3px; height: 7px; border: solid #111; border-width: 0 2px 2px 0; transform: rotate(40deg); }
  .swatch { width: 16px; height: 16px; margin-right: 6px; background: #985877; border: 1px solid #69456a; box-sizing: border-box; }
  .name { font: bold 11px/16px "Open Sans", sans-serif; text-decoration: underline; text-underline-offset: 2px; text-decoration-skip-ink: none; }
  .tabs { display: flex; height: 23px; align-items: flex-start; border-top: 1px solid #b5b5b5; margin-top: 1px; }
  .tabs button { height: 21px; padding: 0 11px; background: #dcdcdc; border: 1px solid #b9b9b9; border-width: 0 1px 1px 0; border-radius: 0 0 3px 3px; }
  .tabs .active { height: 23px; background: #fafafa; border-left-width: 1px; padding: 2px 12px 0 10px; }
  .splitter { width: 6px; flex: none; display: flex; align-items: center; justify-content: center; }
  .splitter span { width: 2px; height: 14px; background: repeating-linear-gradient(#bbb 0 1px, transparent 1px 3px); }
  main { flex: 1; min-width: 0; margin-top: 1px; background: #fff; border: 1px solid #b5b5b5; border-width: 1px 0 1px 1px; }
  .map { display: block; width: 100%; height: 100%; }
  .map polygon { fill: #c43c39; stroke: #232323; stroke-width: 1.2; stroke-linejoin: bevel; }

  footer { flex: none; display: flex; align-items: center; height: 26px; padding: 2px 0 0 4px; white-space: nowrap; overflow: hidden; }
  .locator { display: flex; align-items: center; width: 257px; height: 22px; flex: none; box-sizing: border-box; padding-left: 8px; gap: 7px; background: #fff; border: 1px solid #ababab; border-radius: 3px; }
  .locator .icon { width: 12px; height: 12px; }
  .locator input { flex: 1; min-width: 0; border: 0; padding: 0; background: none; outline: 0; }
  .locator input::placeholder { color: #7e7e7e; opacity: 1; }
  .message { flex: 1; padding-left: 8px; }
  .coord { width: 98px; height: 22px; margin: 0 3px; padding: 0 3px; border: 1px solid #ababab; border-radius: 3px; background: #fff; }
  .small .icon { width: 16px; height: 16px; }
  .small { margin-right: 10px; }
  .lock { margin: 0 5px 0 10px; }
  .combo { position: relative; width: 81px; height: 22px; margin-left: 3px; }
  .combo select { appearance: none; width: 100%; height: 100%; padding: 0 0 0 4px; border: 1px solid #ababab; border-radius: 3px; background: linear-gradient(90deg, #fff 60px, #b5b5b5 60px 61px, #f4f4f4 61px); }
  .combo .arrow { position: absolute; right: 6px; top: 9px; pointer-events: none; }
  .spin { display: flex; width: 88px; height: 20px; margin: 0 7px 0 4px; border: 1px solid #ababab; border-radius: 3px; background: #fff; box-sizing: border-box; }
  .spin input { flex: 1; min-width: 0; border: 0; padding: 0 4px; background: none; }
  .steps { width: 13px; border-left: 1px solid #bbb; display: flex; flex-direction: column; align-items: center; justify-content: center; gap: 3px; background: #f6f6f6; }
  .steps button { width: 0; height: 0; border: 4px solid transparent; }
  .steps .up { border-bottom-color: #555; border-top: 0; }
  .steps .down { border-top-color: #555; border-bottom: 0; }
</style>
